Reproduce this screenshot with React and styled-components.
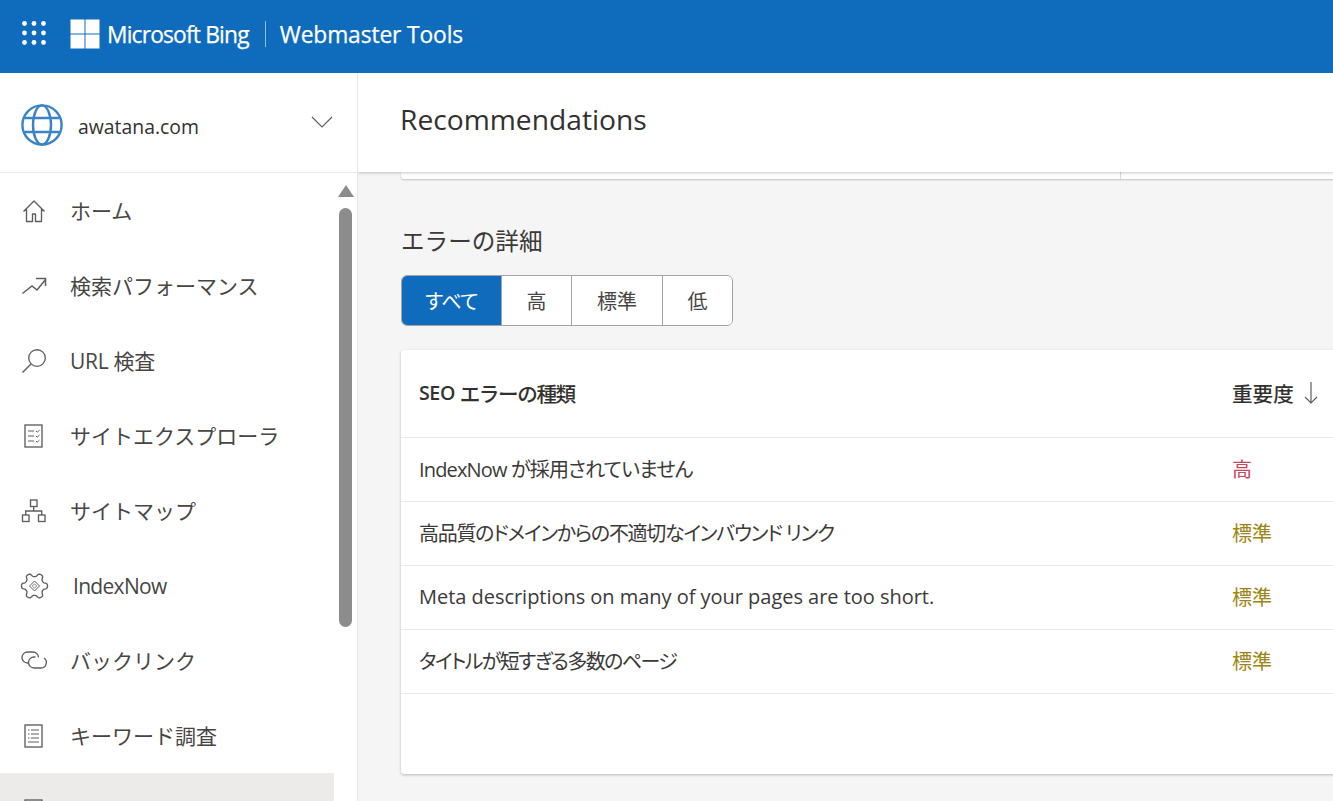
import React from "react";
import styled, { createGlobalStyle } from "styled-components";

const FONT = `"Open Sans", "Noto Sans CJK JP", sans-serif`;

const Global = createGlobalStyle`
  html, body { margin: 0; padding: 0; height: 100%; overflow: hidden; background: #f5f5f5; }
  body { font-family: ${FONT}; color: #323130; }
  #root { height: 100%; }
  * { box-sizing: border-box; }
`;

const Page = styled.div`
  display: flex;
  flex-direction: column;
  width: 1333px;
  height: 801px;
  overflow: hidden;
`;

const TopBar = styled.header`
  flex: 0 0 73px;
  display: flex;
  align-items: center;
  background: #0f6cbd;
  color: #fff;
`;
const Waffle = styled.svg`
  width: 24px;
  height: 24px;
  margin: -8px 24px 0 22px;
  fill: #fff;
`;
const Logo = styled.svg`
  width: 30px;
  height: 30px;
  fill: #fff;
  margin-top: -6px;
`;
const Brand = styled.span`
  font-size: 22.8px;
  font-weight: 400;
  letter-spacing: -0.83px;
  margin-left: 7px;
  margin-top: -5px;
  -webkit-text-stroke: 0.25px #fff;
`;
const Divider = styled.span`
  width: 1px;
  height: 26px;
  margin: -5px 14px 0 16px;
  background: rgba(255, 255, 255, 0.55);
`;
const Product = styled(Brand)`
  margin-left: 0;
  letter-spacing: -0.13px;
`;

const Body = styled.div`
  flex: 1;
  display: flex;
  min-height: 0;
`;

const Sidebar = styled.aside`
  position: relative;
  flex: 0 0 358px;
  background: #fff;
  border-right: 1px solid #e6e6e6;
  overflow: hidden;
`;
const SiteRow = styled.div`
  height: 100px;
  display: flex;
  align-items: center;
  padding: 4px 0 0 21px;
  border-bottom: 1px solid #e9e9e9;
`;
const SiteName = styled.span`
  font-size: 19.4px;
  margin-left: 15px;
  margin-top: 3px;
  color: #323130;
`;
const Chevron = styled.svg`
  width: 22px;
  height: 12px;
  margin-left: auto;
  margin-right: 24px;
  margin-top: -6px;
  fill: none;
  stroke: #605e5c;
  stroke-width: 1.2;
`;
const NavRow = styled.div`
  height: 75px;
  width: 334px;
  display: flex;
  align-items: center;
  padding-left: 20px;
  font-size: 21px;
  color: #484644;
  background: ${(p) => (p.$active ? "#edebe9" : "transparent")};
`;
const NavLabel = styled.span`
  margin-top: ${(p) => (p.$latin ? 0 : -2)}px;
  letter-spacing: ${(p) => p.$track || 0}px;
`;
const NavIcon = styled.svg`
  flex: 0 0 28px;
  width: 28px;
  height: 28px;
  fill: none;
  stroke: #605e5c;
  stroke-width: 1.35;
  overflow: visible;
  margin-right: ${(p) => p.$gap || 22}px;
`;
const ScrollArrow = styled.div`
  position: absolute;
  top: 112px;
  left: 338px;
  width: 0;
  height: 0;
  border-left: 8px solid transparent;
  border-right: 8px solid transparent;
  border-bottom: 12px solid #8c8c8c;
`;
const ScrollThumb = styled.div`
  position: absolute;
  top: 135px;
  left: 339px;
  width: 13px;
  height: 419px;
  border-radius: 7px;
  background: #8c8c8c;
`;

const Main = styled.main`
  position: relative;
  flex: 1;
  min-width: 0;
  display: flex;
  flex-direction: column;
  background: #f5f5f5;
  overflow: hidden;
`;
const PageHead = styled.div`
  position: relative;
  z-index: 1;
  flex: 0 0 99px;
  display: flex;
  align-items: center;
  padding: 0 0 8px 43px;
  background: #fff;
  box-shadow: 0 1px 3px rgba(0, 0, 0, 0.22);
`;
const PageTitle = styled.h1`
  margin: 0 0 0 -1px;
  font-size: 28.2px;
  font-weight: 400;
  color: #323130;
`;
const Content = styled.div`
  flex: 1;
  display: flex;
  flex-direction: column;
  padding-left: 43px;
`;
const CardSliver = styled.div`
  height: 7px;
  margin-right: -20px;
  display: flex;
  background: #fff;
  border-radius: 0 0 3px 3px;
  box-shadow: 0 1px 2px rgba(0, 0, 0, 0.22);
`;
const SliverCell = styled.div`
  width: 720px;
  border-right: 1px solid #d8d8d8;
`;
const SectionTitle = styled.h2`
  margin: 45px 0 0;
  height: 34px;
  line-height: 34px;
  font-size: 23.6px;
  font-weight: 400;
  color: #3b3a39;
`;
const Segments = styled.div`
  display: flex;
  align-self: flex-start;
  margin-top: 17px;
  height: 51px;
  border: 1px solid #a3a3a3;
  border-radius: 6px;
  overflow: hidden;
  background: #fff;
`;
const Segment = styled.div`
  width: ${(p) => p.$w}px;
  display: flex;
  align-items: center;
  justify-content: center;
  font-size: 20px;
  font-feature-settings: "palt";
  letter-spacing: ${(p) => p.$track || 0}px;
  color: ${(p) => (p.$active ? "#fff" : "#484644")};
  background: ${(p) => (p.$active ? "#0f6cbd" : "#fff")};
  border-left: ${(p) => (p.$first ? "none" : "1px solid #a3a3a3")};
`;
const TableCard = styled.section`
  margin-top: 24px;
  margin-right: -20px;
  height: 424px;
  background: #fff;
  border-radius: 3px;
  box-shadow: 0 1px 3px rgba(0, 0, 0, 0.24);
`;
const Row = styled.div`
  display: grid;
  grid-template-columns: 813px 1fr;
  align-items: center;
  height: 64px;
  padding: 0 0 3px 18px;
  border-bottom: 1px solid #e9e9e9;
  font-size: 20px;
  color: #3b3a39;
`;
const HeadRow = styled(Row)`
  height: 88px;
  padding-bottom: 2px;
`;
const Name = styled.div`
  font-feature-settings: "palt";
  letter-spacing: ${(p) => p.$track || 0}px;
`;
const HeadCell = styled.div`
  display: flex;
  align-items: center;
  white-space: pre;
  font-weight: 500;
  font-size: 20.6px;
  letter-spacing: ${(p) => p.$track || 0}px;
  color: #323130;
`;
const HeadLatin = styled.span`
  font-weight: 600;
  font-size: 19.6px;
  letter-spacing: -0.4px;
`;
const SortIcon = styled.svg`
  width: 16px;
  height: 26px;
  margin-left: 9px;
  fill: none;
  stroke: #605e5c;
  stroke-width: 1.2;
`;
const Severity = styled.div`
  color: ${(p) => p.$color};
`;

const gearPath = (() => {
  const pts = [];
  for (let i = 0; i < 120; i++) {
    const a = (i / 120) * Math.PI * 2 + Math.PI / 6;
    const c = Math.cos(6 * a);
    const r = 11.2 + 1.9 * Math.tanh(1.8 * c);
    pts.push(`${(14.5 + r * Math.cos(a)).toFixed(2)} ${(14 + r * Math.sin(a)).toFixed(2)}`);
  }
  return `M${pts.join("L")}Z`;
})();

const icons = {
  home: <path d="M3.5 14.5 14 4l10.5 10.5M6.5 12v12.5h6V17h3v7.5h6V12" strokeLinejoin="round" />,
  trend: <path d="M2.5 21.5 12 14l5 4L26 7M16 6.5h9.5V14" strokeWidth="1.5" />,
  search: <g><circle cx="17" cy="11" r="8.3" /><path d="M11 17 2.5 25.5" /></g>,
  explorer: (
    <g>
      <rect x="5" y="3" width="17" height="22" />
      <path d="M8 9h6M8 14h6M8 19h6M16 9l1.2 1.2L19.5 8M16 14l1.2 1.2 2.3-2.2M16 19l1.2 1.2 2.3-2.2" strokeWidth="1" />
    </g>
  ),
  sitemap: (
    <g>
      <rect x="10.5" y="3" width="6.5" height="6.5" />
      <rect x="2.5" y="18" width="6.5" height="6.5" />
      <rect x="18.5" y="18" width="6.5" height="6.5" />
      <path d="M13.7 9.5V14M5.7 18v-4h16v4" />
    </g>
  ),
  gear: (
    <g>
      <path d={gearPath} strokeLinejoin="round" />
      <path d="M14.5 9l5 5-5 5-5-5z" strokeWidth="1" />
      <path d="M14.5 11.8l2.2 2.2-2.2 2.2-2.2-2.2z" strokeWidth=".8" />
    </g>
  ),
  link: (
    <g>
      <path d="M9 16H7.5a5.5 5.5 0 0 1 0-11H13a5.5 5.5 0 0 1 5.5 5.5" />
      <path d="M15.5 10H14a5.5 5.5 0 0 0 0 11h7a5.5 5.5 0 0 0 3-10" />
    </g>
  ),
  keyword: (
    <g>
      <rect x="5" y="3" width="17" height="22" />
      <path d="M8 8h1.5M11 8h8M8 12h1.5M11 12h8M8 16h1.5M11 16h8M8 20h11" strokeWidth="1" />
    </g>
  ),
};

const navItems = [
  ["home", "ホーム"],
  ["trend", "検索パフォーマンス"],
  ["search", "URL 検査", 22, -0.3],
  ["explorer", "サイトエクスプローラ"],
  ["sitemap", "サイトマップ"],
  ["gear", "IndexNow", 25, -0.7, true],
  ["link", "バックリンク"],
  ["keyword", "キーワード調査"],
];

const rows = [
  ["IndexNow が採用されていません", "高", "#c8475c", -0.84],
  ["高品質のドメインからの不適切なインバウンド リンク", "標準", "#9e8414", -1.28],
  ["Meta descriptions on many of your pages are too short.", "標準", "#9e8414", -0.03],
  ["タイトルが短すぎる多数のページ", "標準", "#9e8414", -1.6],
];

const dots = [];
for (let y = 0; y < 3; y++) for (let x = 0; x < 3; x++) dots.push([x, y]);

export default function App() {
  return (
    <Page>
      <Global />
      <TopBar>
        <Waffle viewBox="0 0 24 24">
          {dots.map(([x, y]) => (
            <circle key={`${x}${y}`} cx={2.5 + x * 9.5} cy={2.5 + y * 9.5} r="2.4" />
          ))}
        </Waffle>
        <Logo viewBox="0 0 30 30">
          <rect x="0.5" y="0.5" width="14" height="14" />
          <rect x="15.5" y="0.5" width="14" height="14" />
          <rect x="0.5" y="15.5" width="14" height="14" />
          <rect x="15.5" y="15.5" width="14" height="14" />
        </Logo>
        <Brand>Microsoft Bing</Brand>
        <Divider />
        <Product>Webmaster Tools</Product>
      </TopBar>
      <Body>
        <Sidebar>
          <SiteRow>
            <svg width="42" height="42" viewBox="0 0 42 42" fill="none" stroke="#3a84c6" strokeWidth="2.4">
              <circle cx="21" cy="21" r="19.6" />
              <ellipse cx="21" cy="21" rx="9" ry="19.6" />
              <path d="M3.5 14h35M3.5 28h35" />
            </svg>
            <SiteName>awatana.com</SiteName>
            <Chevron viewBox="0 0 22 12">
              <path d="M1 1l10 10L21 1" />
            </Chevron>
          </SiteRow>
          {navItems.map(([icon, label, gap, track, latin]) => (
            <NavRow key={icon}>
              <NavIcon viewBox="0 0 28 28" $gap={gap}>
                {icons[icon]}
              </NavIcon>
              <NavLabel $track={track} $latin={latin}>{label}</NavLabel>
            </NavRow>
          ))}
          <NavRow $active>
            <NavIcon viewBox="0 0 28 28">{icons.keyword}</NavIcon>
          </NavRow>
          <ScrollArrow />
          <ScrollThumb />
        </Sidebar>
        <Main>
          <PageHead>
            <PageTitle>Recommendations</PageTitle>
          </PageHead>
          <Content>
            <CardSliver>
              <SliverCell />
            </CardSliver>
            <SectionTitle>エラーの詳細</SectionTitle>
            <Segments>
              <Segment $w={99} $active $first $track={-0.6}>すべて</Segment>
              <Segment $w={70}>高</Segment>
              <Segment $w={91}>標準</Segment>
              <Segment $w={70}>低</Segment>
            </Segments>
            <TableCard>
              <HeadRow>
                <HeadCell $track={-1.4}><HeadLatin>SEO </HeadLatin>エラーの種類</HeadCell>
                <HeadCell>
                  重要度
                  <SortIcon viewBox="0 0 16 26">
                    <path d="M8 2v21M2 17l6 6 6-6" />
                  </SortIcon>
                </HeadCell>
              </HeadRow>
              {rows.map(([name, level, color, track]) => (
                <Row key={name}>
                  <Name $track={track}>{name}</Name>
                  <Severity $color={color}>{level}</Severity>
                </Row>
              ))}
            </TableCard>
          </Content>
        </Main>
      </Body>
    </Page>
  );
}
